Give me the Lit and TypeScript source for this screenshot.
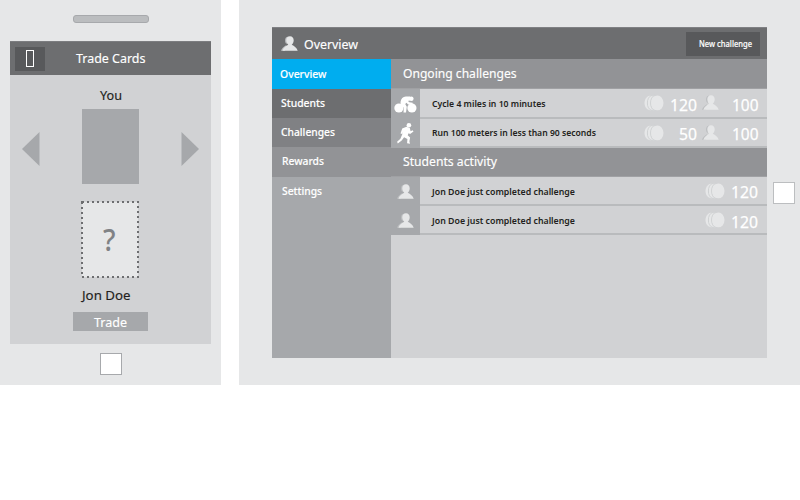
import { LitElement, html, svg, css } from "lit";
import { customElement } from "lit/decorators.js";

/* One line of text fitted to a given width; b is the baseline inside height h. */
const label = (text: string, cls: string, w: number, h: number, b: number) => html`
  <svg class="label ${cls}" width=${w} height=${h}>
    <text x="0" y=${b} textLength=${w} lengthAdjust="spacingAndGlyphs">${text}</text>
  </svg>`;

const bust = svg`
  <path class="shade" d="M7.300 .5C5 .7 3.900 2.500 4.100 4.900c.2 1.700.8 2.700 1.600 3.500C4.500 9.900.8 11.300 0 14.800h4z"/>
  <path d="M5.300 4.500C5.200 2 6.700.3 9 .3s3.800 1.700 3.700 4.200c-.1 1.900-.9 3.400-2 4.200 2.600 1.200 5.300 3.200 6 6.100H1.400c.7-2.900 3.300-4.900 5.900-6.100-1.100-.8-1.900-2.300-2-4.200z"/>`;

const person = html`<svg class="person" width="17" height="15" viewBox="0 0 17 15">${bust}</svg>`;

const coins = html`
  <svg class="coins" width="20" height="16" viewBox="0 0 20 16">
    <path d="M7.500 .4C3.200.4 .5 3.800.5 8s2.700 7.400 7 7.400z"/>
    <path class="rim" d="M7.600.4C4.700 1.400 3.400 4.600 3.400 8s1.300 6.500 4.200 7.400"/>
    <path d="M10.500.4C6.700.4 4.200 3.800 4.200 8s2.500 7.400 6.300 7.400z"/>
    <path class="rim" d="M10.500.4C7.800 1.400 6.600 4.600 6.600 8s1.200 6.500 3.900 7.400"/>
    <ellipse cx="13.400" cy="7.900" rx="6.100" ry="7.400"/>
  </svg>`;

const cyclist = html`
  <svg class="sport" width="23" height="17" viewBox="0 0 23 17">
    <circle cx="4.900" cy="12" r="4.600"/>
    <circle cx="17.900" cy="12" r="4.600"/>
    <circle cx="17.300" cy="2.800" r="2.300"/>
    <path d="M6.500 6C7 2.500 8.900.5 11.800.4l4.300.2.300 3.600-2.400.8 1.300 1.300 3.400.5-.2 2-4.400-.4-1.600-1.600-1.300 1.200 1.600 2.700-.8 5.700h-2.500l.3-4.700-3.100-3.200z"/>
  </svg>`;

const runner = html`
  <svg class="sport" width="17" height="21" viewBox="0 0 17 21">
    <circle cx="11.900" cy="2.300" r="2.300"/>
    <path d="M5.200 5.500l4.300-1.700 3.300 1.300.8 3.200 2-1 .9 1.300-3.400 2.500-1.500-.8-.9 1.900 2.400 2.200-.7 4 .6 2.400-2.900-.6.300-4.300-3.300-1.600-2.400 3.200L.8 20.500l-.7-1.800 3.300-2.900 2.200-5.300.6-2.100-1 2.700-1.700-.6z"/>
  </svg>`;

const baseText = css`
  svg { display: block; flex: none; overflow: visible; }
  .label { font-family: "Noto Sans", "Open Sans", sans-serif; fill: #fff; font-size: 13px; font-weight: 400; stroke: #fff; stroke-width: .15; }
  .dark { fill: #231f20; stroke: #231f20; }
`;

@customElement("trade-phone")
class TradePhone extends LitElement {
  static styles = [baseText, css`
    :host {
      box-sizing: border-box; display: flex; flex-direction: column; align-items: center;
      width: 221px; height: 385px; padding-top: 15px; background: #e6e7e8;
    }
    .speaker { box-sizing: border-box; width: 76px; height: 8px; border: 1px solid #a7a9ac; border-radius: 3px; background: #bbbdbf; }
    .screen { width: 201.500px; height: 302.500px; margin-top: 18px; background: #d1d2d4; }
    .bar { box-sizing: border-box; display: flex; height: 34px; padding: 5.500px 0 0 5.500px; background: #6d6e70; border-top: 1px solid #7c7d80; }
    .back { box-sizing: border-box; width: 30px; height: 24px; padding: 2.500px 0 0 11px; margin: -.5px 30.500px 0 0; background: #58595b; }
    .glyph { box-sizing: border-box; width: 8px; height: 17px; border: 1.400px solid #fff; }
    .bar .label { margin-top: -6.500px; }
    .body { display: flex; flex-direction: column; align-items: center; height: 268px; }
    .swap { display: flex; justify-content: space-between; align-items: center; width: 177px; height: 75px; margin-top: 2px; }
    .arrow { fill: #a6a8ab; margin-top: 4px; }
    .card { width: 57px; height: 75px; background: #a6a8ab; }
    .slot { display: flex; justify-content: center; width: 58px; height: 77px; margin: 17px 1px 0 0; }
    .slot rect { fill: #e6e7e8; stroke: #6d6e70; stroke-width: 2; stroke-dasharray: 2 3; }
    .mark { font: 500 31px "Noto Sans", "Open Sans", sans-serif; fill: #808285; }
    .name { margin-right: 9px; }
    .trade { display: flex; justify-content: center; width: 75px; height: 19px; background: #a6a8ab; }
    .home { box-sizing: border-box; width: 22px; height: 22px; margin-top: 9px; border: 1px solid #a7a9ac; background: #fff; }
  `];
  render() {
    return html`
      <div class="speaker"></div>
      <div class="screen">
        <div class="bar">
          <div class="back"><div class="glyph"></div></div>
          ${label("Trade Cards", "", 69.5, 34, 22)}
        </div>
        <div class="body">
          ${label("You", "dark", 22, 32, 25)}
          <div class="swap">
            <svg class="arrow" width="18" height="34"><path d="M17.500 0v34L0 17z"/></svg>
            <div class="card"></div>
            <svg class="arrow" width="18" height="34"><path d="M.5 0v34L18 17z"/></svg>
          </div>
          <div class="slot">
            <svg width="58" height="77">
              <rect x="1" y="1" width="56" height="75"/>
              <text class="mark" x="22" y="49.500" textLength="12.500" lengthAdjust="spacingAndGlyphs">?</text>
            </svg>
          </div>
          <div class="name">${label("Jon Doe", "dark", 48.5, 34, 22)}</div>
          <div class="trade">${label("Trade", "", 33, 19, 15)}</div>
        </div>
      </div>
      <div class="home"></div>`;
  }
}

@customElement("overview-tablet")
class OverviewTablet extends LitElement {
  static styles = [baseText, css`
    :host {
      box-sizing: border-box; display: flex; width: 561px; height: 385px;
      padding: 27px 0 0 33px; background: #e6e7e8;
    }
    .home { box-sizing: border-box; flex: none; width: 22px; height: 22px; margin: 154.500px 0 0 6px; border: 1px solid #bcbec0; background: #fff; }
    .app { width: 494.500px; height: 330.500px; background: #d1d2d4; }
    .top { box-sizing: border-box; display: flex; height: 32px; padding-left: 9px; background: #6d6e70; border-top: 1px solid #808184; }
    .top .person { margin: 8px 6px 0 0; }
    .create { display: flex; width: 74px; height: 24px; margin: 4px 6.500px 0 auto; background: #58595b; }
    .create .label { margin-left: 12.500px; font-size: 8.500px; font-weight: 500; }
    .split { display: flex; height: 298.500px; }
    .nav { width: 118.500px; background: #a6a8ab; }
    .item { display: flex; height: 29px; }
    .item .label { font-size: 11px; font-weight: 500; }
    .overview { height: 30px; padding-left: 7.500px; background: #00adef; }
    .students { padding-left: 9px; background: #6d6e70; }
    .challenges { padding-left: 9px; background: #808184; }
    .rewards { height: 29.500px; padding-left: 10px; background: #929396; }
    .settings { padding-left: 10px; }
    .main { width: 376px; }
    .head { box-sizing: border-box; display: flex; height: 30px; padding-left: 12px; background: #929396; border-bottom: 1px solid #a0a1a4; }
    .row { box-sizing: border-box; display: flex; height: 30px; }
    .row + .row { height: 29px; }
    .tile { display: flex; align-items: center; justify-content: center; width: 29px; background: #a6a8ab; }
    .line { box-sizing: border-box; display: flex; flex: 1; padding-left: 12.500px; border-bottom: 2px solid #b9bbbd; }
    .line .label { font-size: 9.500px; font-weight: 600; fill: #231f20; stroke: none; }
    .line .label.num { font-size: 16.500px; font-weight: 400; fill: #fff; stroke: #fff; stroke-width: .25; }
    .stats { display: flex; align-items: flex-start; margin-left: auto; padding-right: 8.500px; }
    .person, .coins { fill: #e6e7e8; }
    .shade { fill: #bcbec0; }
    .rim { fill: none; stroke: #c9cbcd; stroke-width: .8; }
    .sport { fill: #fff; }
    .stats .coins { margin-top: 6px; }
    .stats .person { margin: 6px 1px 0 5px; }
    .col { display: flex; justify-content: flex-end; width: 33px; }
    .col.last { width: 38.500px; }
    .activity .head { height: 29px; }
    .activity .row { height: 29px; }
  `];

  private line(icon: unknown, text: unknown, stats: unknown) {
    return html`<div class="row"><div class="tile">${icon}</div><div class="line">${text}<div class="stats">${stats}</div></div></div>`;
  }

  render() {
    return html`
      <div class="app">
        <div class="top">
          ${person}
          ${label("Overview", "", 54, 31, 21)}
          <div class="create">${label("New challenge", "", 53, 24, 15)}</div>
        </div>
        <div class="split">
          <div class="nav">
            <div class="item overview">${label("Overview", "", 46.5, 30, 19)}</div>
            <div class="item students">${label("Students", "", 44, 29, 18)}</div>
            <div class="item challenges">${label("Challenges", "", 54, 29, 18)}</div>
            <div class="item rewards">${label("Rewards", "", 42, 29, 18)}</div>
            <div class="item settings">${label("Settings", "", 40, 29, 18)}</div>
          </div>
          <div class="main">
            <section>
              <div class="head">${label("Ongoing challenges", "", 113.5, 29, 19)}</div>
              ${this.line(cyclist, label("Cycle 4 miles in 10 minutes", "", 113.5, 27, 18), html`
                ${coins}<div class="col">${label("120", "num", 27, 27, 21.5)}</div>
                ${person}<div class="col last">${label("100", "num", 26.5, 27, 21.5)}</div>`)}
              ${this.line(runner, label("Run 100 meters in less than 90 seconds", "", 164, 27, 17), html`
                ${coins}<div class="col">${label("50", "num", 18, 27, 20.5)}</div>
                ${person}<div class="col last">${label("100", "num", 26.5, 27, 20.5)}</div>`)}
            </section>
            <section class="activity">
              <div class="head">${label("Students activity", "", 94, 28, 18)}</div>
              ${this.line(person, label("Jon Doe just completed challenge", "", 143, 27, 18), html`
                ${coins}<div class="col">${label("120", "num", 27, 27, 21)}</div>`)}
              ${this.line(person, label("Jon Doe just completed challenge", "", 143, 27, 18), html`
                ${coins}<div class="col">${label("120", "num", 27, 27, 21.5)}</div>`)}
            </section>
          </div>
        </div>
      </div>
      <div class="home"></div>`;
  }
}

@customElement("app-root")
class AppRoot extends LitElement {
  static styles = css`
    :host { display: flex; gap: 18px; width: 800px; height: 500px; overflow: hidden; background: #fff; }
  `;
  render() {
    return html`<trade-phone></trade-phone><overview-tablet></overview-tablet>`;
  }
}
